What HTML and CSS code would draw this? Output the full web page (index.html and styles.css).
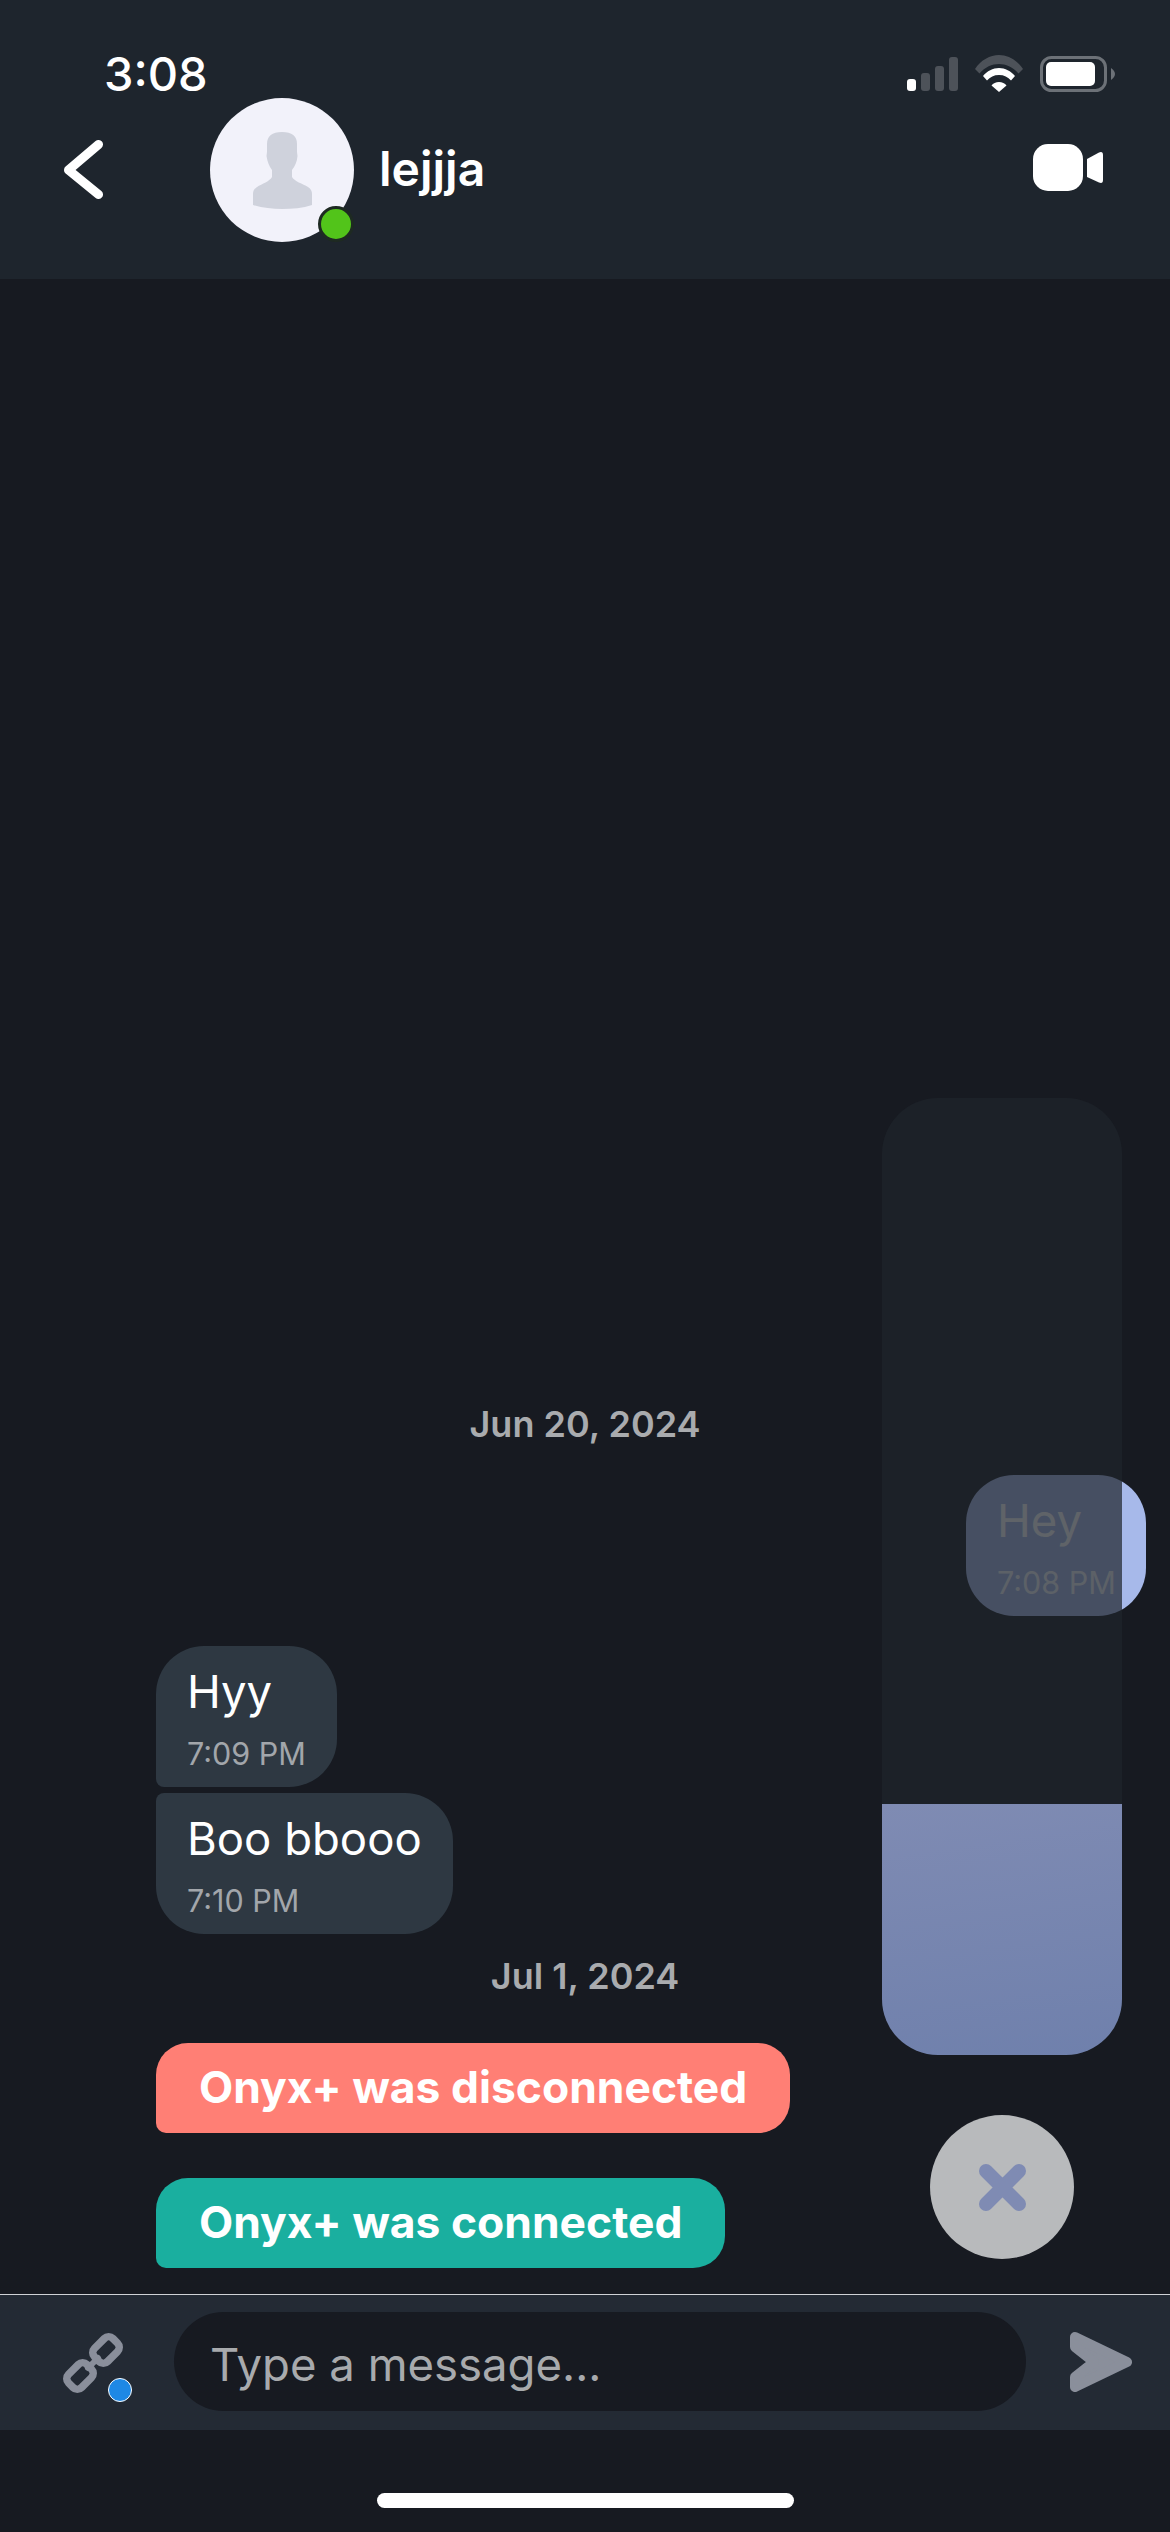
FILE: index.html
```html
<!DOCTYPE html>
<html lang="en">
<head>
<meta charset="utf-8">
<title>lejjja</title>
<link rel="stylesheet" href="styles.css">
</head>
<body>
<div class="screen">
  <header class="header">
    <div class="status">
      <span class="clock">3:08</span>
      <div class="status-icons">
        <svg class="signal" viewBox="0 0 51 34"><rect x="0" y="22" width="9" height="12" rx="3" fill="#fff"/><rect x="14" y="16" width="9" height="18" rx="3" fill="#4d5259"/><rect x="28" y="9" width="9" height="25" rx="3" fill="#4d5259"/><rect x="42" y="0" width="9" height="34" rx="3" fill="#4d5259"/></svg>
        <svg class="wifi" viewBox="0 0 48 37"><path d="M0 14C6 5 15 0 24 0C33 0 42 5 48 14L43.500 18.500C38 12 31 9 24 9C17 9 10 12 4.500 18.500Z" fill="#4d5259"/><path d="M8 21C12 16 18 13 24 13C30 13 36 16 40 21L36 25.500C33 22 29 20 24 20C19 20 15 22 12 25.500Z" fill="#fff"/><path d="M16.500 30.500C18 28.500 21 27 24 27C27 27 30 28.500 31.500 30.500L24 37Z" fill="#fff"/></svg>
        <svg class="battery" viewBox="0 0 75 36"><rect x="1.500" y="1.500" width="64" height="33" rx="10" fill="none" stroke="#6c7177" stroke-width="3"/><rect x="6" y="6" width="49" height="24" rx="5" fill="#fff"/><path d="M71 12Q75 15 75 18Q75 21 71 24Z" fill="#6c7177"/></svg>
      </div>
    </div>
    <nav class="nav">
      <svg class="back" viewBox="0 0 39 59"><path d="M34.500 4.500L4.500 30L34.500 54.500" fill="none" stroke="#fff" stroke-width="9" stroke-linecap="round" stroke-linejoin="round"/></svg>
      <div class="avatar">
        <svg class="avatar-art" viewBox="0 0 144 144"><path d="M72 34C62 34 57 38 57 46V54L56.500 58C57.500 64 59 68 62 72V79C60 83 52 86 47 89C44 91 43 93 43 96V107C52 110 62 111 72 111C82 111 93 110 102 107V96C102 93 101 91 98 89C93 86 84 83 82 79V72C85 68 87 64 87.500 58L87 54V46C87 38 82 34 72 34Z" fill="#cfd2dc"/></svg>
        <span class="online"></span>
      </div>
      <span class="name">lejjja</span>
      <svg class="video" viewBox="0 0 70 47"><rect x="0" y="0" width="50" height="47" rx="15" fill="#fff"/><path d="M54 15L66 8.500Q70 7 70 11V36Q70 40 66 38.500L54 33Z" fill="#fff"/></svg>
    </nav>
  </header>

  <main class="chat">
    <div class="date date-first">Jun 20, 2024</div>
    <div class="bubble bubble-out">
      <div class="msg">Hey</div>
      <div class="time">7:08 PM</div>
    </div>
    <div class="bubble bubble-in first">
      <div class="msg">Hyy</div>
      <div class="time">7:09 PM</div>
    </div>
    <div class="bubble bubble-in second">
      <div class="msg">Boo bbooo</div>
      <div class="time">7:10 PM</div>
    </div>
    <div class="date date-second">Jul 1, 2024</div>
    <div class="pill pill-off">Onyx+ was disconnected</div>
    <div class="pill pill-on">Onyx+ was connected</div>
  </main>

  <footer class="composer">
    <div class="attach">
      <svg class="link" viewBox="0 0 60 60"><g fill="none" stroke="#8a8f9b" stroke-width="7.500"><rect x="30" y="7.750" width="26" height="18.500" rx="6" transform="rotate(-45 43 17)"/><rect x="4" y="33.750" width="26" height="18.500" rx="6" transform="rotate(-45 17 43)"/><path d="M25 35L35 25" stroke-width="6" stroke-linecap="round"/></g></svg>
      <span class="attach-dot"></span>
    </div>
    <div class="input">Type a message...</div>
    <svg class="send" viewBox="0 0 62 62"><path d="M5 6L57 31L5 56V46L24 31L5 16Z" fill="#8a8f9b" stroke="#8a8f9b" stroke-width="10" stroke-linejoin="round"/></svg>
  </footer>
  <div class="home-area"><span class="home-bar"></span></div>

  <div class="panel"><div class="panel-fill"></div></div>
  <button class="close" type="button" aria-label="Close">
    <svg class="close-x" viewBox="0 0 47 47"><path d="M7 7L40 40M40 7L7 40" fill="none" stroke="#7f8bb3" stroke-width="14" stroke-linecap="round"/></svg>
  </button>
</div>
</body>
</html>
```

FILE: styles.css
```css
* { box-sizing: border-box; }
html, body { margin: 0; padding: 0; background: #171a21; }
body { font-family: Inter, "Liberation Sans", sans-serif; color: #fff; }

.screen {
  position: relative;
  width: 1170px;
  height: 2532px;
  display: flex;
  flex-direction: column;
  overflow: hidden;
  background: #171a21;
}

/* header */
.header { height: 279px; background: #1e252d; flex: none; }
.status {
  height: 98px;
  padding: 52px 55px 0 104px;
  display: flex;
  align-items: flex-start;
}
.clock { font-size: 47px; font-weight: 500; line-height: 44px; }
.status-icons { margin-left: auto; display: flex; align-items: flex-start; gap: 17px; margin-top: 3px; }
.signal { width: 51px; height: 34px; margin-top: 2px; }
.wifi { width: 48px; height: 37px; }
.battery { width: 75px; height: 36px; margin-top: 1px; }

.nav { height: 144px; display: flex; align-items: center; padding: 0 67px 0 64px; }
.back { width: 39px; height: 59px; margin-right: 107px; margin-top: -1px; flex: none; }
.avatar { position: relative; width: 144px; height: 144px; border-radius: 50%; background: #f2f2fa; flex: none; }
.avatar-art { display: block; width: 144px; height: 144px; }
.online {
  position: absolute;
  right: 0;
  bottom: 0;
  width: 36px;
  height: 36px;
  border-radius: 50%;
  background: #52c41a;
  border: 3px solid #1e2a22;
}
.name { margin-left: 25px; font-size: 48px; font-weight: 600; line-height: 56px; margin-top: -3px; }
.video { margin-left: auto; width: 70px; height: 47px; margin-top: -5px; }

/* chat */
.chat { flex: 1; display: flex; flex-direction: column; justify-content: flex-end; padding-bottom: 26px; min-height: 0; }
.date { text-align: center; color: #a9abae; font-size: 36px; font-weight: 600; line-height: 40px; }
.date-first { margin-bottom: 31px; }
.date-second { margin-top: 22px; }

.bubble { padding: 18px 31px 0; height: 141px; border-radius: 48px; }
.msg { font-size: 45.500px; line-height: 56px; white-space: nowrap; }
.time { font-size: 30.500px; line-height: 36px; margin-top: 16px; color: #a2a6ab; white-space: nowrap; }
.bubble-out { align-self: flex-end; width: 180px; margin-right: 24px; background: #a7b9ea; }
.bubble-out .time { color: rgba(255, 255, 255, 0.9); }
.bubble-in { align-self: flex-start; margin-left: 156px; background: #2e3842; }
.first { margin-top: 30px; border-bottom-left-radius: 8px; }
.second { margin-top: 6px; border-top-left-radius: 8px; }

.pill {
  align-self: flex-start;
  margin-left: 156px;
  height: 90px;
  padding: 0 43px;
  border-radius: 32px 32px 32px 10px;
  font-size: 44.400px;
  font-weight: 700;
  line-height: 88px;
  white-space: nowrap;
}
.pill-off { margin-top: 47px; background: #ff7f75; }
.pill-on { margin-top: 45px; background: #1aaf9f; }

/* composer */
.composer {
  height: 136px;
  flex: none;
  display: flex;
  align-items: center;
  border-top: 1px solid #d0d2d6;
  background: #232a34;
  padding: 0 0 2px 63px;
}
.attach { position: relative; width: 60px; height: 60px; margin-right: 51px; margin-top: 3px; flex: none; }
.link { display: block; width: 60px; height: 60px; }
.attach-dot {
  position: absolute;
  left: 45px;
  top: 45px;
  width: 24px;
  height: 24px;
  border-radius: 50%;
  background: #1e88e5;
  border: 1px solid #fff;
}
.input {
  width: 852px;
  height: 99px;
  flex: none;
  border-radius: 50px;
  background: #171a21;
  padding-left: 36px;
  color: #a8aaad;
  font-size: 45.500px;
  line-height: 105px;
}
.send { width: 62px; height: 62px; margin-left: 44px; margin-top: 1px; flex: none; }

.home-area { height: 102px; flex: none; padding-top: 63px; display: flex; justify-content: center; }
.home-bar { width: 417px; height: 15px; border-radius: 8px; background: #fff; }

/* overlay */
.panel {
  position: absolute;
  left: 882px;
  top: 1098px;
  width: 240px;
  height: 957px;
  border-radius: 56px;
  overflow: hidden;
  display: flex;
  flex-direction: column;
  justify-content: flex-end;
  background: rgba(31, 37, 44, 0.715);
}
.panel-fill { height: 251px; background: linear-gradient(172deg, #7f8bb3, #6f80ac); }
.close {
  position: absolute;
  left: 930px;
  top: 2115px;
  width: 144px;
  height: 144px;
  padding: 0;
  border: 0;
  border-radius: 50%;
  background: #b8babc;
  display: flex;
  align-items: center;
  justify-content: center;
}
.close-x { width: 47px; height: 47px; }
```
